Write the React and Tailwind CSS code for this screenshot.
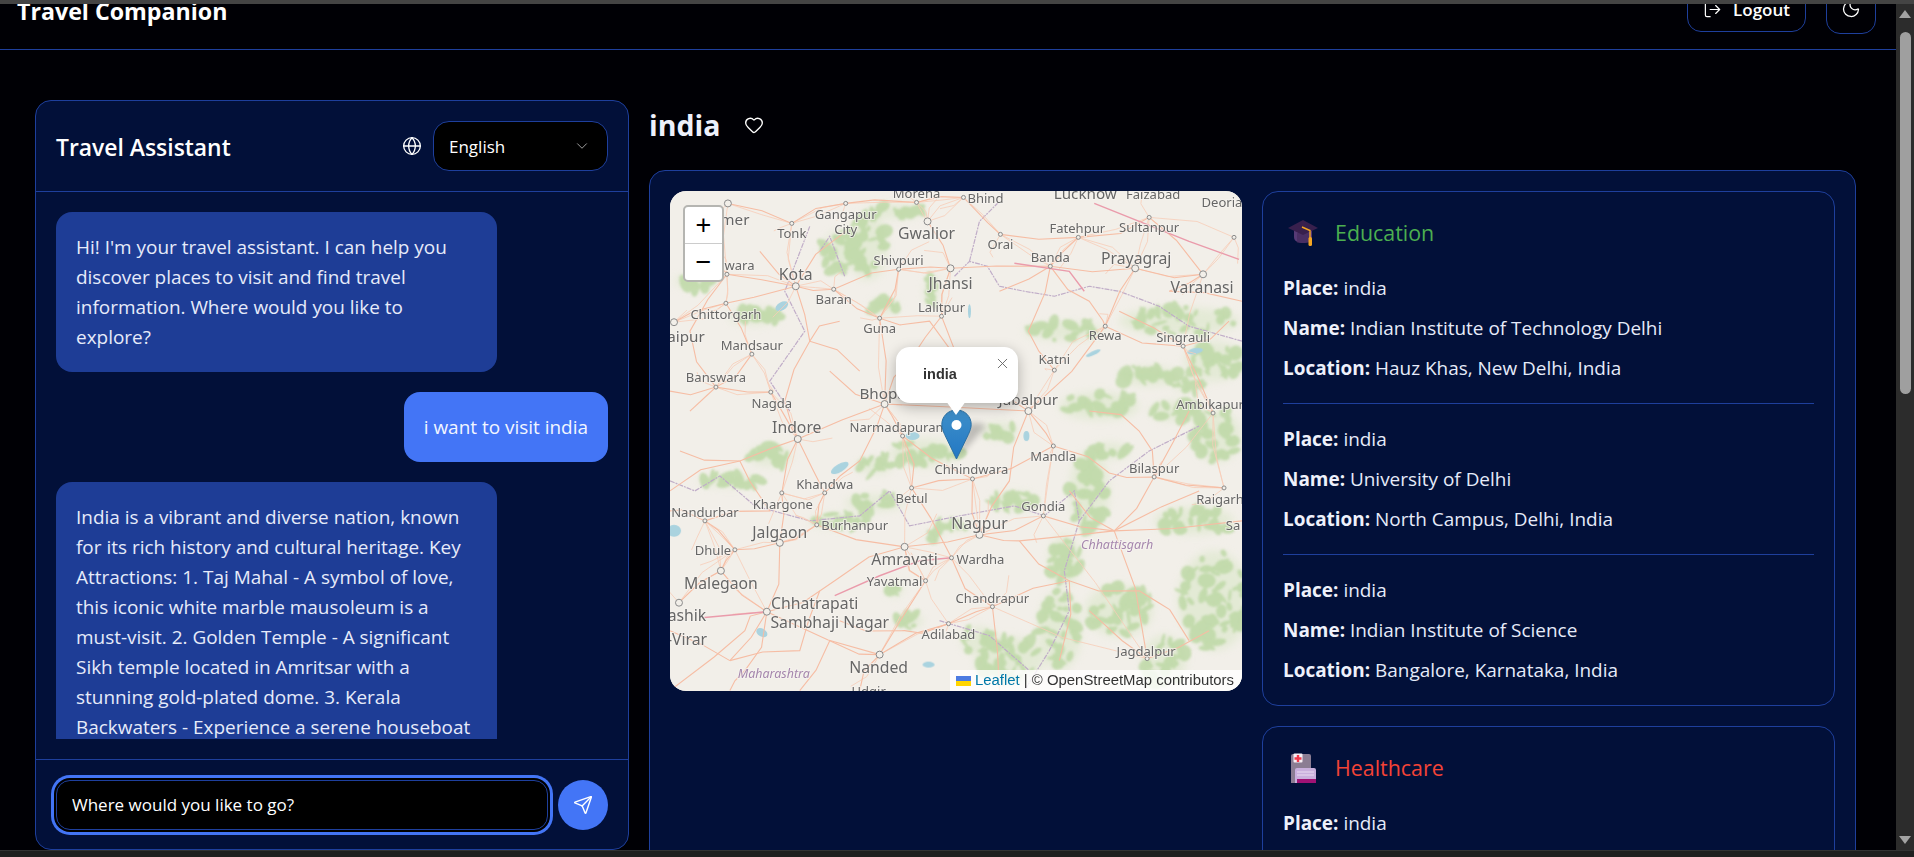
import { ChevronDown, Globe, Heart, LogOut, Moon, Send, X } from "lucide-react";

const FONT = "[font-family:'Open_Sans','Noto_Sans',sans-serif]";

// small seeded random so the map texture is the same on every render
let seed = 7;
const rnd = () => {
  seed = (seed * 16807) % 2147483647;
  return seed / 2147483647;
};

// map data, in map pixels (573 x 500)
const labels = [
  ["mer", 65, 28, 14], ["Tonk", 122, 42, 12], ["Gangapur", 176, 23, 12], ["City", 176, 38, 12],
  ["Morena", 247, 2, 12], ["Bhind", 316, 7, 12], ["Lucknow", 416, 2, 14], ["Faizabad", 484, 3, 12],
  ["Deoria", 553, 11, 12], ["Gwalior", 257, 42, 14.5], ["Fatehpur", 408, 37, 12], ["Sultanpur", 480, 36, 12],
  ["Orai", 331, 53, 12], ["Shivpuri", 229, 69, 12], ["Banda", 381, 66, 12], ["Prayagraj", 467, 67, 14.5],
  ["Kota", 126, 83, 14.5], ["lwara", 68, 74, 12], ["Jhansi", 281, 92, 14.5], ["Varanasi", 533, 96, 14.5],
  ["Baran", 164, 108, 12], ["Lalitpur", 272, 116, 12], ["Chittorgarh", 56, 123, 12], ["Guna", 210, 137, 12],
  ["aipur", 16, 145, 14], ["Mandsaur", 82, 154, 12], ["Rewa", 436, 144, 12], ["Singrauli", 514, 146, 12],
  ["Katni", 385, 168, 12], ["Banswara", 46, 186, 12], ["Nagda", 102, 212, 12], ["Bhopal", 215, 202, 14],
  ["Jabalpur", 359, 208, 14], ["Ambikapur", 541, 213, 12], ["Indore", 127, 236, 14.5], ["Narmadapuram", 229, 236, 12],
  ["Mandla", 384, 265, 12], ["Chhindwara", 302, 278, 12], ["Bilaspur", 485, 277, 12], ["Khandwa", 155, 293, 12],
  ["Khargone", 113, 313, 12], ["Betul", 242, 307, 12], ["Gondia", 374, 315, 12], ["Raigarh", 551, 308, 12],
  ["Sa", 564, 334, 12], ["Nandurbar", 35, 321, 12], ["Nagpur", 310, 332, 14.5], ["Burhanpur", 185, 334, 12],
  ["Jalgaon", 110, 341, 14.5], ["Dhule", 43, 359, 12], ["Amravati", 235, 368, 14.5], ["Wardha", 311, 368, 12],
  ["Yavatmal", 225, 390, 12], ["Malegaon", 51, 392, 14.5], ["Chandrapur", 323, 407, 12], ["Chhatrapati", 145, 412, 14.5],
  ["Sambhaji Nagar", 160, 431, 14.5], ["ashik", 17, 424, 14.5], ["-Virar", 17, 448, 14.5], ["Adilabad", 279, 443, 12],
  ["Jagdalpur", 477, 460, 12], ["Nanded", 209, 476, 14.5], ["Udgir", 199, 500, 12],
];

const dots = [
  [58, 12, 3.5], [122, 32, 2], [176, 12, 2], [247, 11, 2], [294, 6, 2], [258, 30, 3.5], [331, 43, 2], [409, 46, 2],
  [480, 26, 2], [565, 46, 2], [229, 78, 2], [281, 77, 3.5], [381, 75, 2], [466, 77, 3.5], [534, 83, 3.5], [126, 95, 3.5],
  [57, 83, 2], [164, 98, 2], [272, 125, 2], [56, 112, 2], [4, 131, 3.5], [210, 127, 2], [82, 163, 2], [436, 135, 2],
  [514, 155, 2], [385, 179, 2], [46, 196, 2], [101, 201, 2], [215, 213, 3.5], [359, 220, 3.5], [544, 222, 2], [233, 245, 2],
  [128, 248, 3.5], [384, 255, 2], [485, 286, 2], [303, 288, 2], [155, 302, 2], [112, 302, 2], [242, 297, 2], [555, 297, 2],
  [35, 330, 2], [374, 325, 2], [310, 344, 3.5], [147, 334, 2], [110, 352, 3.5], [65, 359, 2], [235, 356, 3.5], [282, 367, 2],
  [256, 390, 2], [51, 380, 3.5], [323, 416, 2], [9, 412, 3.5], [97, 421, 3.5], [279, 433, 2], [478, 468, 2], [210, 464, 3.5],
];

// regions that get a scatter of small green patches
const greenAreas = [
  [198, 55, 20, 34], [170, 60, 18, 20], [225, 20, 30, 7], [262, 100, 7, 16], [215, 115, 14, 8],
  [85, 125, 26, 9], [25, 90, 20, 7], [395, 140, 40, 9], [510, 130, 60, 14], [545, 170, 30, 20],
  [480, 185, 30, 10], [430, 215, 40, 14], [505, 220, 25, 10], [548, 245, 24, 26], [255, 262, 35, 14],
  [205, 275, 18, 8], [330, 240, 18, 9], [170, 330, 30, 7], [205, 312, 30, 8], [60, 290, 32, 6],
  [100, 265, 22, 10], [345, 310, 24, 9], [285, 335, 18, 5], [420, 300, 20, 40], [395, 370, 16, 26],
  [390, 440, 22, 40], [450, 420, 34, 26], [525, 330, 40, 14], [545, 410, 36, 50], [495, 470, 22, 26],
  [340, 470, 34, 24], [310, 450, 18, 14], [240, 430, 14, 7], [225, 398, 8, 8], [265, 345, 8, 5],
  [440, 260, 20, 8], [520, 195, 16, 6],
];

const greens = greenAreas.flatMap(([x, y, rx, ry]) => {
  const count = Math.round(7 + (rx * ry) / 35);
  return Array.from({ length: count }, () => {
    const a = rnd() * Math.PI * 2;
    const d = Math.sqrt(rnd());
    return [
      x + Math.cos(a) * d * rx,
      y + Math.sin(a) * d * ry,
      2 + rnd() * Math.min(rx, 13) * 0.6,
      1.5 + rnd() * Math.min(ry, 10) * 0.6,
      rnd() * 180,
    ];
  });
});

const water = [
  [170, 277, 10, 4, -30], [92, 442, 6, 4, 30], [259, 474, 6, 3, 0], [526, 160, 8, 3, -10], [424, 162, 8, 2, -25],
  [357, 245, 3, 5, 0], [4, 340, 7, 6, 0], [112, 115, 7, 4, -30], [243, 245, 7, 4, 0], [300, 120, 1.5, 7, 0],
];

const roads = [
  [[58, 12], [122, 32], [176, 12], [247, 11], [294, 6], [331, 43], [409, 46], [480, 26], [534, 83]],
  [[258, 30], [281, 77], [272, 125], [300, 180], [359, 220], [384, 255]],
  [[126, 95], [164, 98], [229, 78], [281, 77], [381, 75], [466, 77], [534, 83]],
  [[57, 83], [126, 95], [56, 112], [4, 131]], [[56, 112], [82, 163], [46, 196], [101, 201], [128, 248]],
  [[126, 95], [140, 150], [115, 210], [128, 248], [112, 302], [110, 352], [97, 421], [75, 480], [60, 500]],
  [[229, 78], [210, 127], [215, 213], [233, 245], [242, 297], [282, 367], [323, 416], [330, 500]],
  [[128, 248], [215, 213], [359, 220], [436, 135], [466, 77]], [[436, 135], [514, 155], [544, 222]],
  [[359, 220], [340, 290], [310, 344], [374, 325], [445, 340], [573, 330]], [[310, 344], [235, 356], [147, 334], [110, 352]],
  [[303, 288], [310, 344]], [[303, 288], [242, 297]], [[384, 255], [440, 282], [485, 286], [555, 297]], [[485, 286], [445, 340], [478, 468]],
  [[9, 412], [51, 380], [65, 359], [35, 330], [0, 320]], [[51, 380], [97, 421], [75, 440], [0, 500]], [[97, 421], [210, 464], [279, 433], [323, 416]],
  [[235, 356], [256, 390], [210, 464], [190, 500]], [[97, 421], [165, 390], [235, 356]], [[65, 359], [110, 352]],
  [[310, 344], [350, 350], [445, 340]], [[323, 416], [400, 390], [470, 400], [520, 450]], [[128, 248], [70, 270], [0, 300]],
  [[60, 470], [97, 421]], [[60, 470], [0, 440]], [[130, 500], [160, 450], [210, 464]],
  [[409, 46], [381, 75], [359, 140], [385, 179]], [[534, 83], [500, 100], [573, 110]],
  [[155, 302], [128, 248]], [[155, 302], [147, 334]], [[20, 220], [46, 196]], [[0, 200], [46, 196]], [[272, 125], [240, 170], [215, 213]],
  [[160, 180], [215, 213], [190, 270], [155, 302]], [[300, 180], [260, 130], [210, 127], [164, 98]], [[90, 60], [126, 95], [176, 40]],
  [[10, 260], [70, 270], [100, 320], [35, 330]], [[233, 245], [303, 288], [384, 255]], [[150, 400], [130, 460], [60, 470]],
  [[450, 120], [514, 155], [560, 130]], [[400, 300], [445, 340], [530, 300]], [[420, 420], [478, 468], [540, 440]],
  [[330, 100], [381, 75], [420, 110], [436, 135]], [[350, 350], [400, 390], [390, 470]], [[520, 220], [485, 286], [470, 240], [420, 220]],
  [[30, 60], [57, 83], [20, 140], [46, 196]], [[170, 430], [235, 440], [279, 433]], [[170, 130], [140, 150], [190, 180]],
];

// roads in the reference wander, so split each leg and push the middle sideways
const wobble = (points) =>
  points
    .map(([x, y], i) => {
      if (i === 0) return `M${x} ${y}`;
      const [px, py] = points[i - 1];
      const mx = (x + px) / 2 + (rnd() - 0.5) * 14;
      const my = (y + py) / 2 + (rnd() - 0.5) * 14;
      return `L${mx.toFixed(1)} ${my.toFixed(1)}L${x} ${y}`;
    })
    .join("");

const roadPaths = roads.map(wobble);

// minor roads: every town also links to its two nearest towns, plus a spur
const minorRoads = dots.flatMap(([x, y]) => {
  const near = dots
    .filter(([a, b]) => a !== x || b !== y)
    .sort((p, q) => Math.hypot(p[0] - x, p[1] - y) - Math.hypot(q[0] - x, q[1] - y))
    .slice(0, 2)
    .map(([a, b]) => wobble([[x, y], [a, b]]));
  const spur = wobble([[x, y], [x + (rnd() - 0.5) * 70, y + (rnd() - 0.5) * 70]]);
  return [...near, spur];
});

const highways = ["M32 427L97 421", "M165 405L210 385L250 370L282 367", "M425 12L520 50L570 68", "M345 72L400 80L415 100"];

const borders = [
  "M285 85L300 70L318 75L330 95L355 100L385 105L420 95L450 100L490 115L520 135L573 150",
  "M300 70L310 30L330 10M175 85L160 45L150 60",
  "M0 290L25 300L50 285L85 315L140 330L190 325L220 300L240 335L290 325L345 315L375 325L405 300L410 330L395 380L400 420L380 460L355 500",
  "M410 330L440 290L480 260L530 235",
  "M140 35L115 100L135 140L100 190L120 220",
  "M270 430L320 445L360 480",
];

function MapDrawing() {
  return (
    <svg viewBox="0 0 573 500" className="absolute inset-0 w-full h-full blur-[0.4px]">
      <rect width="573" height="500" fill="#f2efe9" />
      <g fill="#d8e6c6" opacity="0.55" className="blur-[4px]">
        {greenAreas.map(([x, y, rx, ry], i) => (
          <ellipse key={i} cx={x} cy={y} rx={rx} ry={ry} />
        ))}
      </g>
      <g fill="#b8d69f" opacity="0.75" className="blur-[1px]">
        {greens.map(([x, y, rx, ry, r], i) => (
          <ellipse key={i} cx={x} cy={y} rx={rx} ry={ry} transform={`rotate(${r} ${x} ${y})`} />
        ))}
      </g>
      <g fill="#aad3df">
        {water.map(([x, y, rx, ry, r], i) => (
          <ellipse key={i} cx={x} cy={y} rx={rx} ry={ry} transform={`rotate(${r} ${x} ${y})`} />
        ))}
      </g>
      <g fill="none" stroke="#c0adc8" strokeWidth="1.2" strokeDasharray="5 1 2 1">
        {borders.map((d, i) => <path key={i} d={d} />)}
      </g>
      <g fill="none" stroke="#f7cdb8" strokeWidth="0.8">
        {minorRoads.map((d, i) => <path key={i} d={d} />)}
      </g>
      <g fill="none" stroke="#f6bda4" strokeWidth="1.1">
        {roadPaths.map((d, i) => <path key={i} d={d} />)}
      </g>
      <g fill="none" stroke="#ea9bab" strokeWidth="1.4">
        {highways.map((d, i) => <path key={i} d={d} />)}
      </g>
      <g fill="#f2efe9" stroke="#8a8a8a" strokeWidth="1">
        {dots.map(([x, y, r], i) => <circle key={i} cx={x} cy={y} r={r} />)}
      </g>
      <g className="[font-family:'Noto_Sans',sans-serif]" fill="#666" stroke="#f6f4ef" strokeWidth="2" strokeOpacity="0.7" textAnchor="middle" dominantBaseline="central" style={{ paintOrder: "stroke" }}>
        {labels.map(([t, x, y, s]) => (
          <text key={t} x={x} y={y} fontSize={s * 1.09}>{t}</text>
        ))}
        <text x="448" y="354" fontSize="12.5" fontStyle="italic" fill="#a586ad">Chhattisgarh</text>
        <text x="104" y="483" fontSize="12.5" fontStyle="italic" fill="#a586ad">Maharashtra</text>
      </g>
      {/* marker shadow */}
      <path d="M287 268L312 240Q322 232 305 232L300 232Z" fill="#000" opacity="0.22" className="blur-[3px]" />
    </svg>
  );
}

function Marker() {
  return (
    <svg viewBox="0 0 31 51" className="absolute left-[271px] top-[218px] w-[31px] h-[51px]">
      <defs>
        <linearGradient id="pin" x1="0" y1="0" x2="0" y2="1">
          <stop offset="0" stopColor="#3f8fc9" />
          <stop offset="1" stopColor="#2278c4" />
        </linearGradient>
      </defs>
      <path d="M15.5 1C7 1 .8 7.5.8 15.5c0 3.500 1.400 6.800 2.800 9.900L15.500 50l11.900-24.600c1.400-3.100 2.800-6.400 2.800-9.900C30.200 7.500 24 1 15.500 1Z" fill="url(#pin)" stroke="#2a6fa3" strokeWidth="1" />
      <circle cx="15.500" cy="16" r="5" fill="#fff" />
    </svg>
  );
}

function MapCard() {
  return (
    <div className="relative h-[500px] rounded-2xl overflow-hidden bg-[#f2efe9] tracking-normal">
      <MapDrawing />
      <div className="absolute left-[13px] top-[14px] w-[41px] rounded-[5px] border-2 border-[#b5b5b1] bg-white text-black flex flex-col [font-family:'Liberation_Sans',sans-serif]">
        <div className="h-[37px] flex items-center justify-center text-[27px] leading-none border-b border-[#ccc]">+</div>
        <div className="h-[36px] flex items-center justify-center text-[27px] leading-none">−</div>
      </div>
      <Marker />
      <div className="absolute left-[226px] top-[156px] w-[122px] h-[56px] rounded-[14px] bg-white shadow-[0_4px_14px_rgba(0,0,0,0.28)] text-[#333] [font-family:'Liberation_Sans',sans-serif]">
        <span className="absolute left-[27px] top-[18px] text-[14.5px] leading-[18px] font-bold">india</span>
        <X size={17} strokeWidth={1.3} className="absolute right-[7px] top-[8px] text-[#666]" />
        <div className="absolute left-[50px] top-[48px] w-[20px] h-[20px] [clip-path:polygon(50%_100%,0_30%,100%_30%)] bg-white" />
      </div>
      <div className="absolute right-0 bottom-0 h-[21px] w-[292px] pl-[6px] flex items-center gap-[4px] bg-white/80 text-[14.9px] text-[#333] rounded-br-2xl [font-family:'Liberation_Sans',sans-serif]">
        <svg viewBox="0 0 15 10" className="w-[15px] h-[10px] shrink-0">
          <rect width="15" height="5" fill="#4c7be1" />
          <rect y="5" width="15" height="5" fill="#ffd500" />
        </svg>
        <span className="whitespace-nowrap"><span className="text-[#0078a8]">Leaflet</span> | © OpenStreetMap contributors</span>
      </div>
    </div>
  );
}

function CapIcon() {
  return (
    <svg viewBox="0 0 30 27" className="w-[30px] h-[27px]">
      <path d="M6 10v8c0 4 4 6 9 6s9-2 9-6v-8Z" fill="#563a75" />
      <path d="M9 15c0-3 12-3 12 0v9H9Z" fill="#3c2452" opacity="0.5" />
      <path d="M15 1L30 9 15 16 0 9Z" fill="#38204d" />
      <path d="M14 8l8 3.500v9" fill="none" stroke="#f5a623" strokeWidth="1.400" />
      <rect x="20.500" y="18" width="3.500" height="9" rx="1.500" fill="#f5a623" />
    </svg>
  );
}

function HospitalIcon() {
  return (
    <svg viewBox="0 0 26 30" className="w-[26px] h-[30px]">
      <path d="M1 3a2 2 0 0 1 2-2h16a2 2 0 0 1 2 2v27H1Z" fill="#8b7d93" />
      <rect x="3.500" y="0.500" width="9" height="9" rx="1" fill="#f7eef4" />
      <path d="M6.800 2h2.400v2.300h2.300v2.400H9.200V9H6.800V6.700H4.500V4.300h2.300Z" fill="#f2374a" />
      <path d="M5 17a2 2 0 0 1 2-2h17a2 2 0 0 1 2 2v13H5Z" fill="#c9b0dd" />
      <path d="M7 19h17M7 22h17" stroke="#eadcf2" strokeWidth="1.200" />
      <rect x="7" y="26" width="19" height="4" fill="#a01274" />
    </svg>
  );
}

const education = [
  ["india", "Indian Institute of Technology Delhi", "Hauz Khas, New Delhi, India"],
  ["india", "University of Delhi", "North Campus, Delhi, India"],
  ["india", "Indian Institute of Science", "Bangalore, Karnataka, India"],
];

const healthcare = [["india", "All India Institute of Medical Sciences", "Ansari Nagar, New Delhi, India"]];

function Row({ label, value }) {
  return (
    <p className="h-[30px] leading-[30px] whitespace-nowrap">
      <strong className="font-bold text-[#eef1fb]">{label}:</strong> {value}
    </p>
  );
}

function InfoCard({ icon, title, color, items }) {
  return (
    <div className="rounded-2xl border border-[#1e3f9c] px-5 pt-5 pb-5">
      <div className="flex items-center h-[41px] mb-5">
        <div className="w-[40px] flex justify-center mr-[12px]">{icon}</div>
        <h3 className={`text-[21.4px] pt-[2px] ${color}`}>{title}</h3>
      </div>
      {items.map(([place, name, location], i) => (
        <div key={name} className={`flex flex-col gap-[10px] ${i < items.length - 1 ? "pb-5 mb-5 border-b border-[#1e3f9c]" : ""}`}>
          <Row label="Place" value={place} />
          <Row label="Name" value={name} />
          <Row label="Location" value={location} />
        </div>
      ))}
    </div>
  );
}

function Bubble({ mine, children }) {
  return (
    <div className={mine
      ? "self-end shrink-0 rounded-2xl bg-[#4375f6] px-5 py-5 leading-[30px] text-[#f2f5ff]"
      : "self-start shrink-0 w-[441px] rounded-2xl bg-[#1e3d96] px-5 py-5 leading-[30px] text-[#e6ebfa]"}>
      {children}
    </div>
  );
}

function Chat() {
  return (
    <aside className="w-[594px] h-[750px] shrink-0 flex flex-col rounded-2xl border border-[#1e3f9c] bg-[#021039]">
      <div className="h-[91px] shrink-0 flex items-center justify-between px-5 border-b border-[#1e3f9c]">
        <h2 className="text-[22.9px] font-semibold text-white pt-[5px]">Travel Assistant</h2>
        <div className="flex items-center gap-[11px]">
          <Globe size={20} strokeWidth={1.6} className="text-white" />
          <div className="w-[175px] h-[50px] flex items-center justify-between pl-[15px] pr-[16px] rounded-2xl border border-[#1e3f9c] bg-black text-[17px] text-white">
            <span className="pt-[2px]">English</span>
            <ChevronDown size={18} strokeWidth={1.3} className="text-[#a0a0a0]" />
          </div>
        </div>
      </div>
      <div className="flex-1 min-h-0 p-5 flex">
        <div className="flex-1 min-h-0 overflow-hidden flex flex-col gap-5">
          <Bubble>Hi! I'm your travel assistant. I can help you discover places to visit and find travel information. Where would you like to explore?</Bubble>
          <Bubble mine>i want to visit india</Bubble>
          <Bubble>India is a vibrant and diverse nation, known for its rich history and cultural heritage. Key Attractions: 1. Taj Mahal - A symbol of love, this iconic white marble mausoleum is a must-visit. 2. Golden Temple - A significant Sikh temple located in Amritsar with a stunning gold-plated dome. 3. Kerala Backwaters - Experience a serene houseboat cruise through the lush green canals of the south.</Bubble>
        </div>
      </div>
      <div className="h-[90px] shrink-0 flex items-center gap-[10px] px-5 border-t border-[#1e3f9c]">
        <input
          placeholder="Where would you like to go?"
          className="flex-1 min-w-0 h-[50px] px-[15px] rounded-[14px] border border-[#1e3f9c] bg-black text-[17px] text-white placeholder:text-white outline-none ring-[3px] ring-[#4375f6] ring-offset-2 ring-offset-black"
        />
        <button className="w-[50px] h-[50px] shrink-0 rounded-full bg-[#4375f6] flex items-center justify-center text-white">
          <Send size={20} strokeWidth={1.7} />
        </button>
      </div>
    </aside>
  );
}

function ScrollBar() {
  return (
    <div className="w-[18px] shrink-0 flex flex-col items-center bg-[#2c2c2c]">
      <div className="mt-[6px] w-0 h-0 border-x-[6px] border-x-transparent border-b-[8px] border-b-[#a3a3a3]" />
      <div className="mt-[14px] w-[11px] h-[362px] rounded-full bg-[#9f9f9f]" />
      <div className="mt-auto mb-[6px] w-0 h-0 border-x-[6px] border-x-transparent border-t-[8px] border-t-[#a3a3a3]" />
    </div>
  );
}

export default function App() {
  return (
    <div className={`h-screen flex flex-col overflow-hidden bg-[#000005] text-[18.95px] text-[#e6ebfa] ${FONT}`}>
      <div className="h-[4px] shrink-0 bg-[#444]" />
      <div className="flex-1 min-h-0 flex">
        <div className="flex-1 min-w-0 overflow-hidden">
          {/* page is scrolled a little, so the navbar is cut off at the top */}
          <nav className="-mt-[35px] h-[81px] flex items-center justify-between pl-[17px] pr-5 border-b border-[#1e3f9c]">
            <span className="text-[23.2px] font-bold text-white pt-[4px]">Travel Companion</span>
            <div className="flex items-center gap-5">
              <button className="w-[119px] h-[45px] flex items-center justify-center gap-[11px] rounded-[14px] border border-[#1e3f9c] text-[17px] font-semibold text-white">
                <LogOut size={19} strokeWidth={1.5} />
                <span className="pt-[2px]">Logout</span>
              </button>
              <button className="w-[50px] h-[49px] flex items-center justify-center rounded-[14px] border border-[#1e3f9c] text-white">
                <Moon size={20} strokeWidth={1.5} />
              </button>
            </div>
          </nav>
          <main className="flex items-start gap-5 pl-[35px] pr-10 pt-[50px]">
            <Chat />
            <section className="flex-1 min-w-0">
              <div className="h-[50px] mb-5 flex items-center gap-6">
                <h1 className="text-[28.5px] font-bold text-[#eef1fb]">india</h1>
                <Heart size={20} strokeWidth={1.6} className="text-white" />
              </div>
              <div className="rounded-2xl border border-[#1e3f9c] bg-[#021039] p-5 grid grid-cols-[572px_1fr] gap-5 items-start">
                <MapCard />
                <div className="flex flex-col gap-5">
                  <InfoCard icon={<CapIcon />} title="Education" color="text-[#4caf50]" items={education} />
                  <InfoCard icon={<HospitalIcon />} title="Healthcare" color="text-[#f44336]" items={healthcare} />
                </div>
              </div>
            </section>
          </main>
        </div>
        <ScrollBar />
      </div>
      <div className="h-[7px] shrink-0 bg-[#1f1f1f] border-t border-[#333]" />
    </div>
  );
}
